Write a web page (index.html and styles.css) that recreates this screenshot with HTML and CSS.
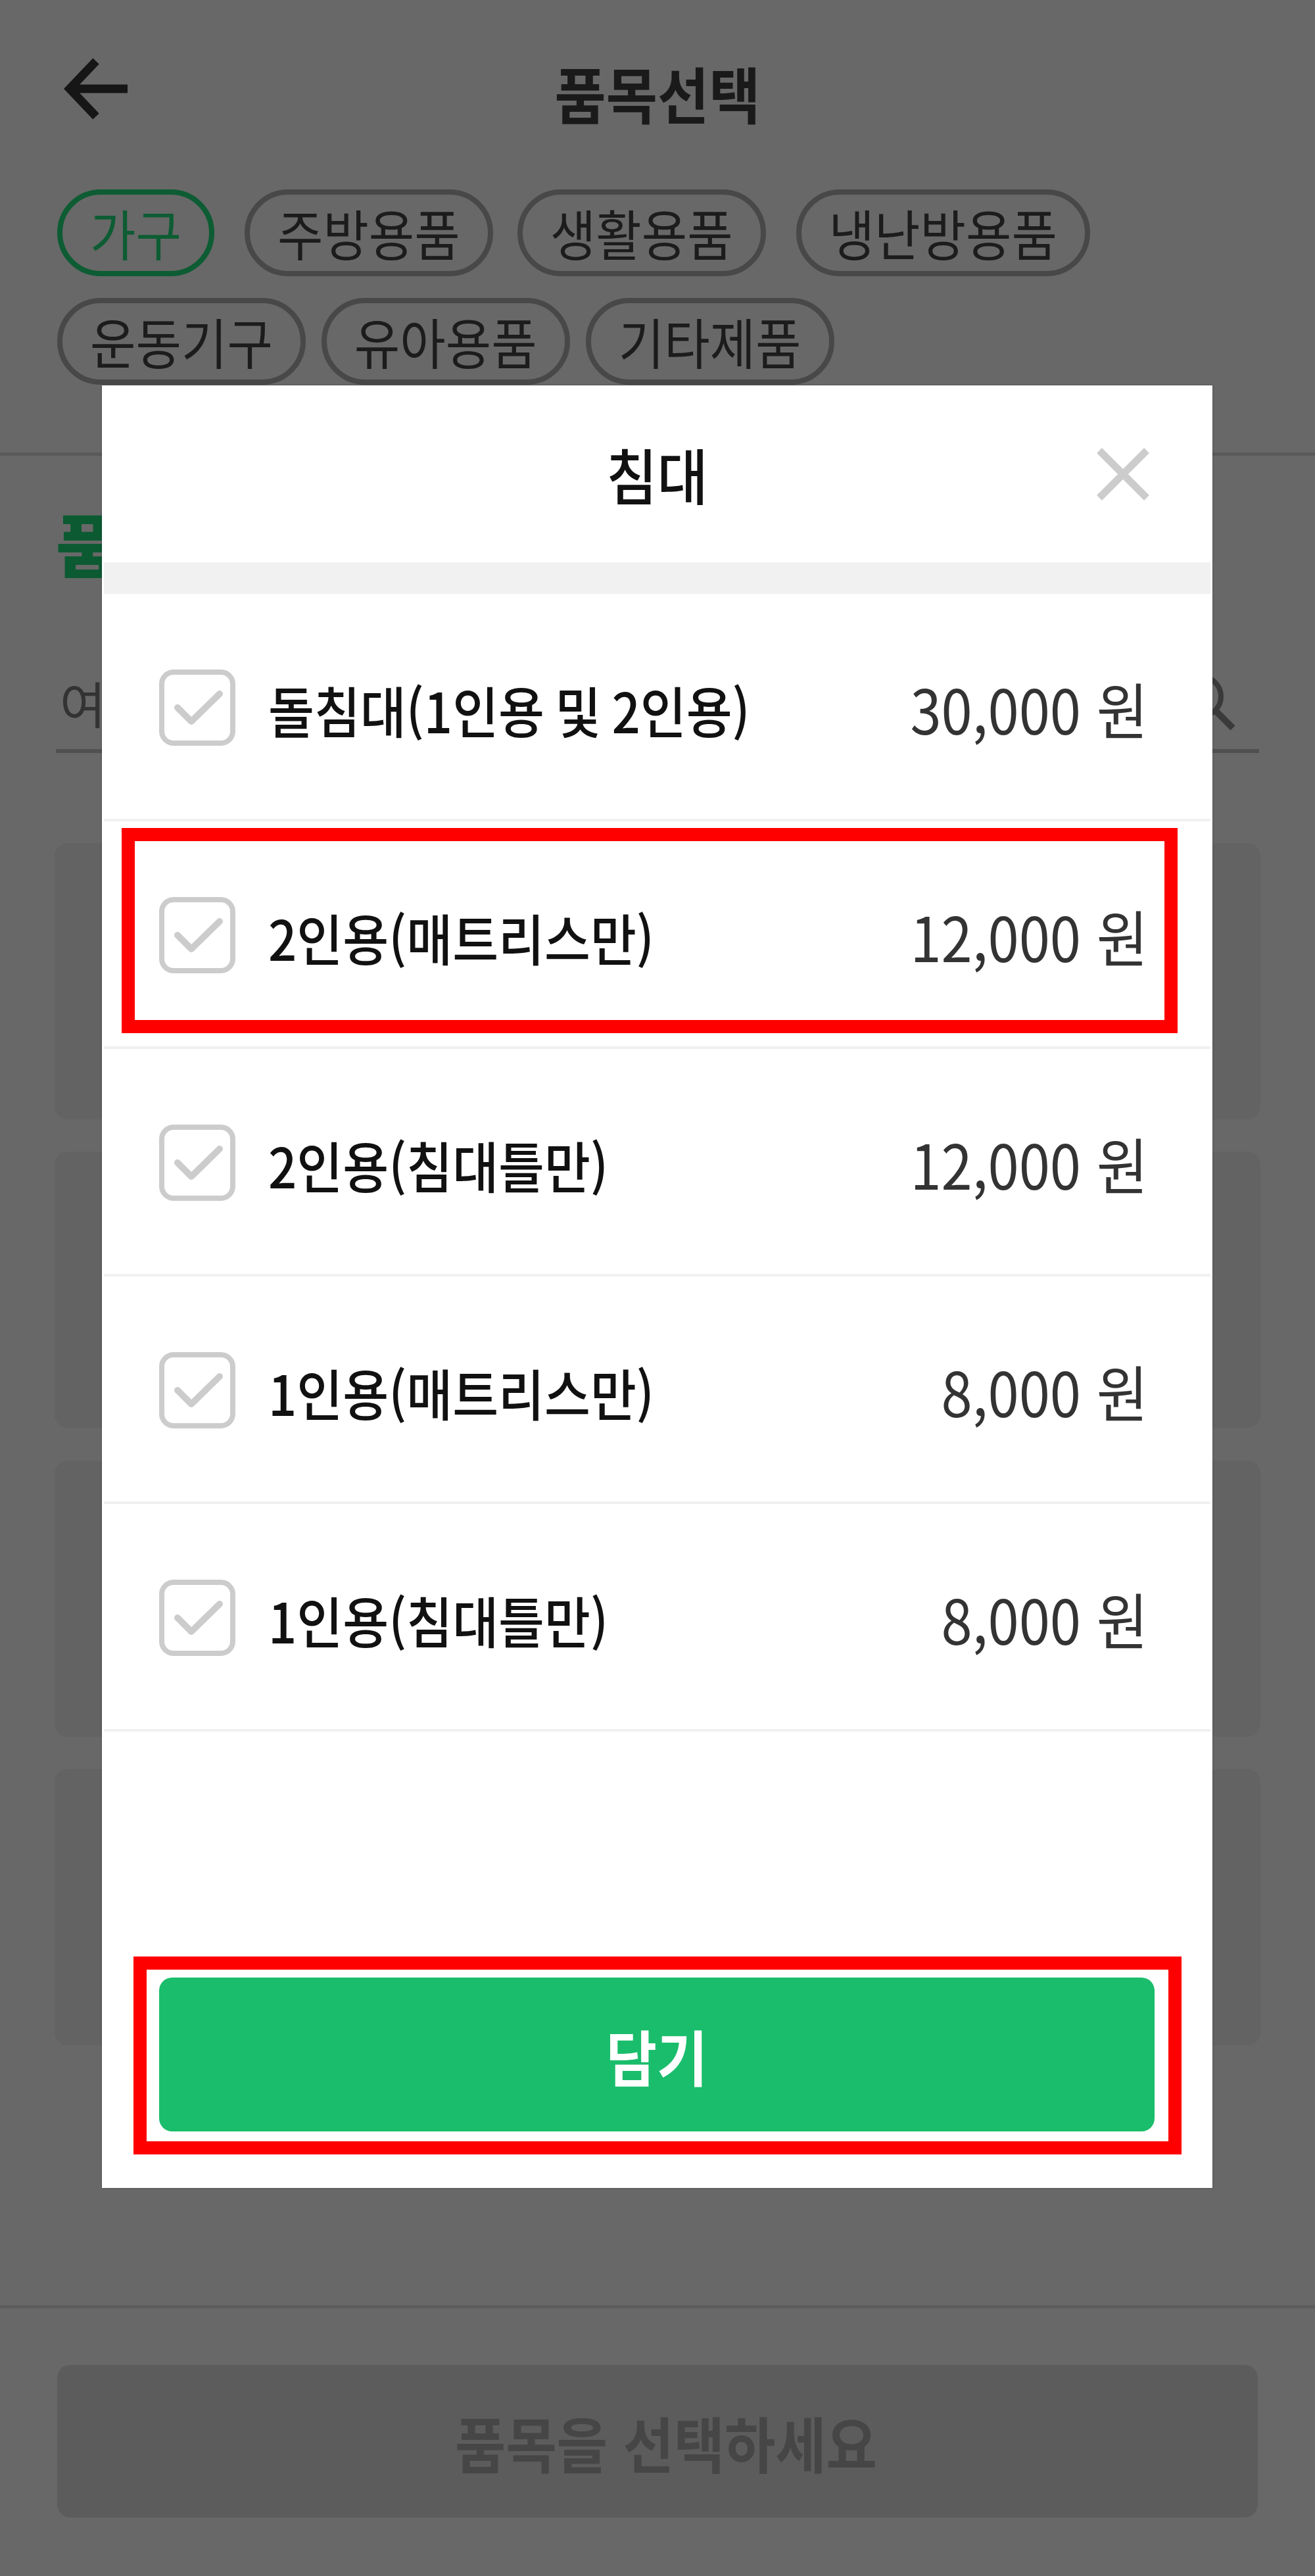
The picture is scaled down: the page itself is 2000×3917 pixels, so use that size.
FILE: index.html
```html
<!DOCTYPE html>
<html lang="ko">
<head>
<meta charset="utf-8">
<title>품목선택</title>
<link rel="stylesheet" href="styles.css">
</head>
<body>
<div class="page">
  <header class="topbar">
    <svg class="back" viewBox="0 0 100 100" width="100" height="100"><path d="M98 47H12M50 5 10 47 50 89" fill="none" stroke="#161616" stroke-width="13"/></svg>
    <h1 class="title">품목선택</h1>
  </header>
  <div class="chips">
    <div class="chip-row">
      <span class="chip chip-on"><span class="tall">가구</span></span>
      <span class="chip"><span class="tall">주방용품</span></span>
      <span class="chip chip-near"><span class="tall">생활용품</span></span>
      <span class="chip"><span class="tall">냉난방용품</span></span>
    </div>
    <div class="chip-row chip-row-tight">
      <span class="chip"><span class="tall">운동기구</span></span>
      <span class="chip"><span class="tall">유아용품</span></span>
      <span class="chip"><span class="tall">기타제품</span></span>
    </div>
  </div>
  <main class="content">
    <h2 class="heading">품목검색</h2>
    <div class="search">
      <span class="placeholder">여기에 품목을 검색하세요</span>
      <svg class="glass" viewBox="0 0 90 90" width="90" height="90"><circle cx="36" cy="36" r="30" fill="none" stroke="#3a3a3a" stroke-width="8"/><path d="M56 56 84 84" stroke="#3a3a3a" stroke-width="10"/></svg>
    </div>
    <div class="cards">
      <div class="card"></div>
      <div class="card"></div>
      <div class="card"></div>
      <div class="card"></div>
    </div>
  </main>
  <footer class="footer">
    <div class="footer-btn"><span class="tall">품목을 선택하세요</span></div>
  </footer>
</div>

<section class="modal">
  <div class="modal-head">
    <h3 class="modal-title">침대</h3>
    <svg class="close" viewBox="0 0 80 80" width="80" height="80"><path d="M4 4 76 76M76 4 4 76" stroke="#cccccc" stroke-width="11"/></svg>
  </div>
  <div class="modal-bar"></div>
  <ul class="list">
    <li class="item">
      <svg class="check" viewBox="0 0 116 116" width="116" height="116"><rect x="4" y="4" width="108" height="108" rx="18" fill="none" stroke="#cccccc" stroke-width="8"/><path d="M28 58 49 79 92 37" fill="none" stroke="#cccccc" stroke-width="10" stroke-linecap="round" stroke-linejoin="round"/></svg>
      <span class="name">돌침대(1인용 및 2인용)</span>
      <span class="price">30,000 원</span>
    </li>
    <li class="item">
      <svg class="check" viewBox="0 0 116 116" width="116" height="116"><rect x="4" y="4" width="108" height="108" rx="18" fill="none" stroke="#cccccc" stroke-width="8"/><path d="M28 58 49 79 92 37" fill="none" stroke="#cccccc" stroke-width="10" stroke-linecap="round" stroke-linejoin="round"/></svg>
      <span class="name">2인용(매트리스만)</span>
      <span class="price">12,000 원</span>
    </li>
    <li class="item">
      <svg class="check" viewBox="0 0 116 116" width="116" height="116"><rect x="4" y="4" width="108" height="108" rx="18" fill="none" stroke="#cccccc" stroke-width="8"/><path d="M28 58 49 79 92 37" fill="none" stroke="#cccccc" stroke-width="10" stroke-linecap="round" stroke-linejoin="round"/></svg>
      <span class="name">2인용(침대틀만)</span>
      <span class="price">12,000 원</span>
    </li>
    <li class="item">
      <svg class="check" viewBox="0 0 116 116" width="116" height="116"><rect x="4" y="4" width="108" height="108" rx="18" fill="none" stroke="#cccccc" stroke-width="8"/><path d="M28 58 49 79 92 37" fill="none" stroke="#cccccc" stroke-width="10" stroke-linecap="round" stroke-linejoin="round"/></svg>
      <span class="name">1인용(매트리스만)</span>
      <span class="price">8,000 원</span>
    </li>
    <li class="item">
      <svg class="check" viewBox="0 0 116 116" width="116" height="116"><rect x="4" y="4" width="108" height="108" rx="18" fill="none" stroke="#cccccc" stroke-width="8"/><path d="M28 58 49 79 92 37" fill="none" stroke="#cccccc" stroke-width="10" stroke-linecap="round" stroke-linejoin="round"/></svg>
      <span class="name">1인용(침대틀만)</span>
      <span class="price">8,000 원</span>
    </li>
  </ul>
  <div class="modal-foot">
    <button class="add"><span class="tall">담기</span></button>
  </div>
</section>

<div class="mark mark-row"></div>
<div class="mark mark-btn"></div>
</body>
</html>
```

FILE: styles.css
```css
* { box-sizing: border-box; }
html, body { margin: 0; padding: 0; }
body {
  position: relative;
  width: 2000px;
  height: 3917px;
  overflow: hidden;
  background: #686868;
  font-family: "Noto Sans CJK KR", "Noto Sans", sans-serif;
}
.tall {
  display: inline-block;
  transform: scaleY(1.1);
}
.page {
  display: flex;
  flex-direction: column;
  height: 3917px;
}
.topbar {
  position: relative;
  display: flex;
  align-items: center;
  justify-content: center;
  height: 288px;
  padding-bottom: 8px;
}
.back { position: absolute; left: 96px; top: 88px; }
.title {
  margin: 0;
  font-size: 85px;
  line-height: 1.2;
  font-weight: 700;
  color: #1a1a1a;
  transform: scaleY(1.1);
}
.chips {
  display: flex;
  flex-direction: column;
  gap: 33px;
  padding: 0 87px 103px;
  border-bottom: 5px solid #5a5a5a;
}
.chip-row { display: flex; gap: 46px; }
.chip-row-tight { gap: 24px; }
.chip {
  display: flex;
  align-items: center;
  justify-content: center;
  height: 132px;
  padding: 0 42px;
  border: 8px solid #484848;
  border-radius: 66px;
  font-size: 75.5px;
  line-height: 1;
  color: #1c1c1c;
}
.chip-near { margin-left: -9px; }
.chip-on { border-color: #0d5c33; color: #0d5c33; }
.content {
  padding: 70px 85px 0;
  display: flex;
  flex-direction: column;
}
.heading {
  margin: 0;
  font-size: 104px;
  line-height: 1.2;
  font-weight: 900;
  color: #0c5a31;
}
.search {
  display: flex;
  align-items: center;
  justify-content: space-between;
  height: 138px;
  margin-top: 119px;
  padding: 0 34px 10px 6px;
  border-bottom: 6px solid #505050;
}
.placeholder { font-size: 76px; color: #333; white-space: nowrap; overflow: hidden; width: 1400px; }
.cards {
  display: flex;
  flex-direction: column;
  gap: 49.5px;
  margin: 137px -2px 0;
}
.card {
  height: 420px;
  background: #636363;
  border-radius: 20px;
}
.footer {
  margin-top: auto;
  padding: 86px 87px 89px 87px;
  border-top: 5px solid #5d5d5d;
}
.footer-btn {
  display: flex;
  align-items: center;
  justify-content: center;
  height: 232px;
  padding-left: 26px;
  background: #5c5c5c;
  border-radius: 20px;
  font-size: 84px;
  font-weight: 700;
  color: #464646;
}
.modal {
  position: absolute;
  left: 155px;
  top: 586px;
  width: 1689px;
  height: 2741px;
  display: flex;
  flex-direction: column;
  background: #fff;
  box-shadow: 0 0 2px rgba(0, 0, 0, .5);
}
.modal-head {
  position: relative;
  display: flex;
  align-items: center;
  justify-content: center;
  height: 269px;
}
.modal-title {
  margin: 0;
  font-size: 84px;
  line-height: 1.2;
  font-weight: 500;
  color: #111;
  transform: scaleY(1.1);
}
.close { position: absolute; left: 1513px; top: 95px; }
.modal-bar {
  height: 48px;
  margin: 0 3px;
  background: #f1f1f1;
}
.list { list-style: none; margin: 0; padding: 0; }
.item {
  display: flex;
  align-items: center;
  height: 346px;
  margin: 0 3px;
  padding: 4px 95px 0 84px;
  border-bottom: 4px solid #f1f1f1;
}
.check { flex: none; margin-right: 50px; }
.name {
  flex: 1;
  font-size: 76px;
  line-height: 1.2;
  font-weight: 500;
  word-spacing: -5px;
  color: #111;
  transform-origin: left center;
  transform: translateY(4px) scaleY(1.1);
}
.price {
  font-size: 85px;
  line-height: 1.2;
  color: #333;
  transform: scaleY(1.1);
}
.modal-foot {
  margin-top: auto;
  padding: 0 88px 86px 87px;
}
.add {
  display: block;
  width: 100%;
  height: 234px;
  border: 0;
  border-radius: 20px;
  background: #1abd6b;
  color: #fff;
  font-family: inherit;
  font-size: 84px;
  font-weight: 700;
}
.mark {
  position: absolute;
  border: 20px solid #ff0000;
}
.mark-row { left: 185px; top: 1259px; width: 1606px; height: 312px; }
.mark-btn { left: 203px; top: 2975px; width: 1594px; height: 301px; }
```
